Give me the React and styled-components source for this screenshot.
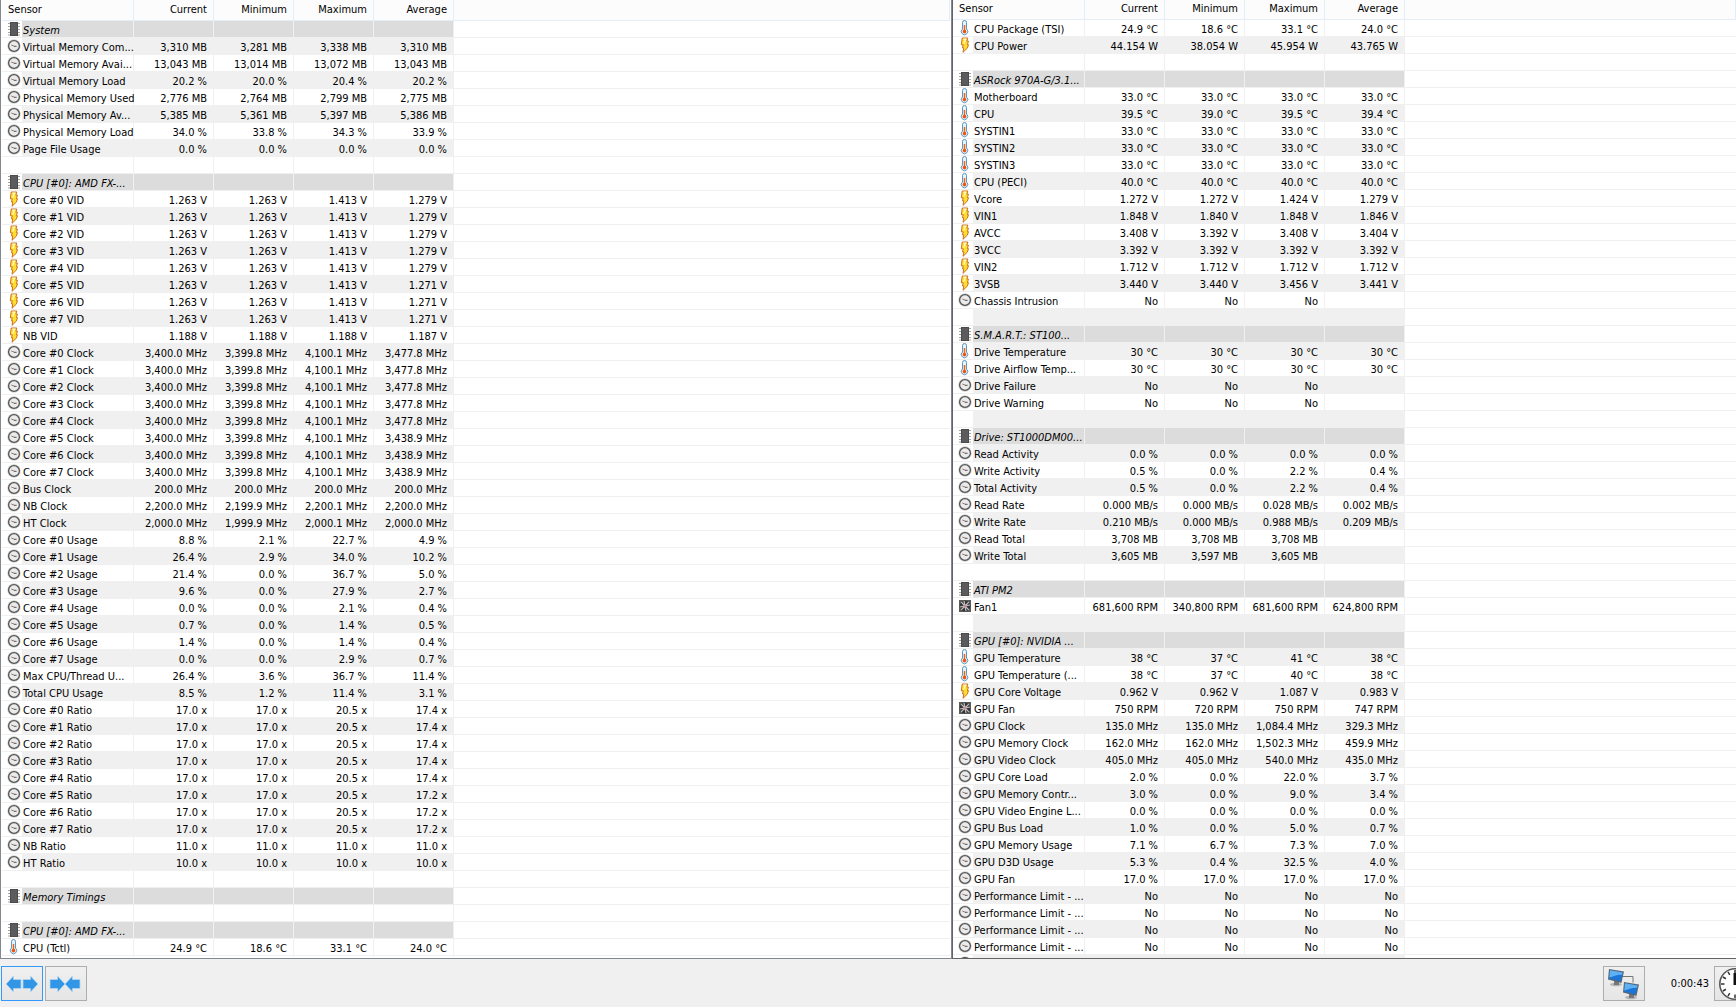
import React from "react";
import styled, { createGlobalStyle, css } from "styled-components";

const GlobalStyle = createGlobalStyle`
  * {
    box-sizing: border-box;
  }
  body {
    margin: 0;
    background: #f0f0f0;
    color: #000;
    font-family: "DejaVu Sans Condensed", Tahoma, "DejaVu Sans", sans-serif;
    font-size: 11px;
  }
`;

const Window = styled.div`
  display: flex;
  flex-direction: column;
  height: 100vh;
  overflow: hidden;
`;

const Panels = styled.main`
  display: grid;
  grid-template-columns: 17fr 14fr;
  flex: 1;
  min-height: 0;
`;

const Panel = styled.section`
  overflow: hidden;
  background: #fff;
  padding: 0 1px;
  border: 1px solid #828790;
  border-top: none;
  ${(props) =>
    props.$dark &&
    css`
      padding: 0;
      border-color: #646464;
      border-right: none;
    `}
`;

const Table = styled.table`
  width: 100%;
  table-layout: fixed;
  border-collapse: separate;
  border-spacing: 0;
`;

const NameCol = styled.col`
  width: 132px;
`;

const ValueCol = styled.col`
  width: 80px;
`;

const HeadCell = styled.th`
  height: ${(props) => (props.$short ? 20 : 21)}px;
  padding: 0 6px;
  background: #fcfcfc;
  border-right: 1px solid #e3eefb;
  border-bottom: 1px solid #e3eefb;
  font-weight: normal;
  line-height: ${(props) => (props.$short ? 18 : 20)}px;
  text-align: ${(props) => (props.$left ? "left" : "right")};
  vertical-align: top;
`;

const fills = {
  plain: "#fff",
  striped: "#f0f0f0",
  group: "#dcdcdc",
};

const cellLines = css`
  border-right: 1px solid #f0f0f0;
  border-bottom: 1px solid #f0f0f0;
`;

const NameCell = styled.th`
  ${cellLines}
  height: 17px;
  padding: 0;
  font-weight: normal;
  font-style: ${(props) => (props.$fill === "group" ? "italic" : "normal")};
  text-align: left;
`;

const NameBox = styled.div`
  display: flex;
  height: 16px;
`;

const IconBox = styled.span`
  display: flex;
  align-items: center;
  flex: none;
  width: 20px;
  padding-left: 5px;
`;

const Name = styled.span`
  flex: 1;
  min-width: 0;
  padding: 4px 0 0 1px;
  background: ${(props) => fills[props.$fill]};
  line-height: 12px;
  white-space: nowrap;
`;

const ValueCell = styled.td`
  ${cellLines}
  height: 17px;
  padding: 4px 6px 0 0;
  background: ${(props) => fills[props.$fill]};
  line-height: 12px;
  text-align: right;
  white-space: nowrap;
`;

const RestCell = styled.td`
  padding: 0;
  border-bottom: 1px solid #f0f0f0;
`;

const Toolbar = styled.footer`
  display: flex;
  align-items: center;
  flex: none;
  gap: 2px;
  height: 48px;
  padding: 1px 0 0 1px;
  overflow: hidden;
  background: #f0f0f0;
`;

const ToolButton = styled.button`
  display: flex;
  align-items: center;
  justify-content: center;
  flex: none;
  width: 42px;
  height: 35px;
  padding: 0;
  border: 1px solid ${(props) => (props.$active ? "#3399ff" : "#adadad")};
  background: linear-gradient(#f0f0f0, #e5e5e5);
`;

// the last button runs past the edge of the window
const Status = styled.div`
  display: flex;
  align-items: center;
  gap: 5px;
  margin-left: auto;
  margin-right: -20px;
`;

const Elapsed = styled.time`
  width: 59px;
  text-align: right;
`;

function ChipIcon() {
  return (
    <svg width="14" height="14" viewBox="0 0 14 14">
      <path
        d="M1 1.5h12M1 4.5h12M1 7.5h12M1 10.5h12M1 13h12"
        stroke="#a4a4a4"
        strokeWidth="1.2"
      />
      <rect x="3" y="0" width="8" height="14" fill="#4b4b4b" />
      <rect x="4" y="1" width="6" height="12" fill="#5b5b5d" />
    </svg>
  );
}

function ClockIcon() {
  return (
    <svg width="14" height="14" viewBox="0 0 14 14">
      <circle cx="7" cy="7" r="6.7" fill="#cfcfcf" />
      <circle cx="7" cy="7" r="5.4" fill="#ebebeb" stroke="#555" strokeWidth="1.3" />
      <path d="M4.3 6l3 1.2" stroke="#8a6a64" strokeWidth=".9" />
      <path d="M7 7.3h2.600" stroke="#444" strokeWidth=".9" />
    </svg>
  );
}

function BoltIcon() {
  return (
    <svg width="14" height="16" viewBox="0 0 14 16">
      <path
        d="M4.200 1h5.600L8.900 4.200h1.600L9.300 7.700h1.200L9.300 11.200 5 15.300l.8-4.500H4.400l.9-3H3.300z"
        fill="#ffdf2e"
        stroke="#c4641c"
        strokeWidth=".9"
      />
      <path d="M5.300 2.200h2.400L5.600 6.600" stroke="#fffbd0" strokeWidth="1.2" fill="none" />
    </svg>
  );
}

function ThermometerIcon() {
  return (
    <svg width="14" height="16" viewBox="0 0 14 16">
      <path
        d="M4.500 9V2.500a2 2 0 0 1 4 0V9a3.200 3.200 0 1 1-4 0z"
        fill="#e4f3fc"
        stroke="#5f97bb"
        strokeWidth="1"
      />
      <path d="M6.500 5v6" stroke="#f0641a" strokeWidth="1.500" />
      <circle cx="6.500" cy="11.600" r="1.800" fill="#f0540c" />
    </svg>
  );
}

function FanIcon() {
  return (
    <svg width="14" height="14" viewBox="0 0 14 14">
      <rect x="1" y="1" width="12" height="12" fill="#5a5a5a" />
      <circle cx="7" cy="7" r="5.3" fill="#333" />
      <path
        d="M7 7L6 2M7 7l3.800-3.800M7 7l5-1M7 7l3.800 3.800M7 7l1 5M7 7l-3.800 3.800M7 7L2 8M7 7L3.200 3.200"
        stroke="#c4c4c4"
        strokeWidth="1.200"
      />
      <circle cx="7" cy="7" r="1.5" fill="#c58f98" />
    </svg>
  );
}

const icons = {
  chip: ChipIcon,
  clock: ClockIcon,
  volt: BoltIcon,
  temp: ThermometerIcon,
  fan: FanIcon,
};

function ArrowsIcon({ inward }) {
  const left = "M0 9l7.500-8v3.500H15v9H7.500V17z";
  const right = "M15 9L7.500 1v3.500H0v9h7.500V17z";
  return (
    <svg width="34" height="18" viewBox="0 0 34 18" fill="#3296e6" stroke="#b5d5ee" strokeWidth=".8">
      <path d={inward ? right : left} transform="translate(1 0)" />
      <path d={inward ? left : right} transform={inward ? "translate(16 0)" : "translate(18 0)"} />
    </svg>
  );
}

function Monitor() {
  return (
    <>
      <ellipse cx="8" cy="15.500" rx="6" ry="1.800" fill="#b4b4b4" />
      <path d="M6 12h5v4H6z" fill="#777" />
      <path d="M1 0l15 2.500-2.600 11.500L0 10.500z" fill="#5b6670" />
      <path d="M2 1.200l12.600 2.200-2 9L1.200 9.600z" fill="#1976d8" />
      <path d="M2 1.200l12.600 2.200-.5 2.400C9 5.600 5 7.500 1.300 8.500z" fill="#5fb0f2" />
    </>
  );
}

function NetworkIcon() {
  return (
    <svg width="34" height="32" viewBox="0 0 34 32">
      <path d="M15 8.500h11v6" fill="none" stroke="#777" />
      <g transform="translate(1 1)">
        <Monitor />
      </g>
      <g transform="translate(16 14)">
        <Monitor />
      </g>
    </svg>
  );
}

function StopwatchIcon() {
  const ticks = [0, 30, 60, 90, 120, 150, 180, 210, 240, 270, 300, 330];
  return (
    <svg width="34" height="34" viewBox="0 0 34 34">
      <circle cx="17" cy="17" r="15.2" fill="#fff" stroke="#555" strokeWidth="1.6" />
      {ticks.map((angle) => (
        <path
          key={angle}
          d="M17 3v3.500"
          stroke="#333"
          strokeWidth="1.5"
          transform={`rotate(${angle} 17 17)`}
        />
      ))}
      <path d="M17 18V6" stroke="#111" strokeWidth="3" />
    </svg>
  );
}

// a line is "icon|name|current|minimum|maximum|average", an empty line is a spacer
const parse = (text) =>
  text
    .trim()
    .split("\n")
    .map((line) => {
      const [icon, name = "", ...values] = line.trim().split("|");
      return { icon, name, values };
    });

const systemRows = parse(`
  chip|System
  clock|Virtual Memory Com...|3,310 MB|3,281 MB|3,338 MB|3,310 MB
  clock|Virtual Memory Avai...|13,043 MB|13,014 MB|13,072 MB|13,043 MB
  clock|Virtual Memory Load|20.2 %|20.0 %|20.4 %|20.2 %
  clock|Physical Memory Used|2,776 MB|2,764 MB|2,799 MB|2,775 MB
  clock|Physical Memory Av...|5,385 MB|5,361 MB|5,397 MB|5,386 MB
  clock|Physical Memory Load|34.0 %|33.8 %|34.3 %|33.9 %
  clock|Page File Usage|0.0 %|0.0 %|0.0 %|0.0 %

  chip|CPU [#0]: AMD FX-...
  volt|Core #0 VID|1.263 V|1.263 V|1.413 V|1.279 V
  volt|Core #1 VID|1.263 V|1.263 V|1.413 V|1.279 V
  volt|Core #2 VID|1.263 V|1.263 V|1.413 V|1.279 V
  volt|Core #3 VID|1.263 V|1.263 V|1.413 V|1.279 V
  volt|Core #4 VID|1.263 V|1.263 V|1.413 V|1.279 V
  volt|Core #5 VID|1.263 V|1.263 V|1.413 V|1.271 V
  volt|Core #6 VID|1.263 V|1.263 V|1.413 V|1.271 V
  volt|Core #7 VID|1.263 V|1.263 V|1.413 V|1.271 V
  volt|NB VID|1.188 V|1.188 V|1.188 V|1.187 V
  clock|Core #0 Clock|3,400.0 MHz|3,399.8 MHz|4,100.1 MHz|3,477.8 MHz
  clock|Core #1 Clock|3,400.0 MHz|3,399.8 MHz|4,100.1 MHz|3,477.8 MHz
  clock|Core #2 Clock|3,400.0 MHz|3,399.8 MHz|4,100.1 MHz|3,477.8 MHz
  clock|Core #3 Clock|3,400.0 MHz|3,399.8 MHz|4,100.1 MHz|3,477.8 MHz
  clock|Core #4 Clock|3,400.0 MHz|3,399.8 MHz|4,100.1 MHz|3,477.8 MHz
  clock|Core #5 Clock|3,400.0 MHz|3,399.8 MHz|4,100.1 MHz|3,438.9 MHz
  clock|Core #6 Clock|3,400.0 MHz|3,399.8 MHz|4,100.1 MHz|3,438.9 MHz
  clock|Core #7 Clock|3,400.0 MHz|3,399.8 MHz|4,100.1 MHz|3,438.9 MHz
  clock|Bus Clock|200.0 MHz|200.0 MHz|200.0 MHz|200.0 MHz
  clock|NB Clock|2,200.0 MHz|2,199.9 MHz|2,200.1 MHz|2,200.0 MHz
  clock|HT Clock|2,000.0 MHz|1,999.9 MHz|2,000.1 MHz|2,000.0 MHz
  clock|Core #0 Usage|8.8 %|2.1 %|22.7 %|4.9 %
  clock|Core #1 Usage|26.4 %|2.9 %|34.0 %|10.2 %
  clock|Core #2 Usage|21.4 %|0.0 %|36.7 %|5.0 %
  clock|Core #3 Usage|9.6 %|0.0 %|27.9 %|2.7 %
  clock|Core #4 Usage|0.0 %|0.0 %|2.1 %|0.4 %
  clock|Core #5 Usage|0.7 %|0.0 %|1.4 %|0.5 %
  clock|Core #6 Usage|1.4 %|0.0 %|1.4 %|0.4 %
  clock|Core #7 Usage|0.0 %|0.0 %|2.9 %|0.7 %
  clock|Max CPU/Thread U...|26.4 %|3.6 %|36.7 %|11.4 %
  clock|Total CPU Usage|8.5 %|1.2 %|11.4 %|3.1 %
  clock|Core #0 Ratio|17.0 x|17.0 x|20.5 x|17.4 x
  clock|Core #1 Ratio|17.0 x|17.0 x|20.5 x|17.4 x
  clock|Core #2 Ratio|17.0 x|17.0 x|20.5 x|17.4 x
  clock|Core #3 Ratio|17.0 x|17.0 x|20.5 x|17.4 x
  clock|Core #4 Ratio|17.0 x|17.0 x|20.5 x|17.4 x
  clock|Core #5 Ratio|17.0 x|17.0 x|20.5 x|17.2 x
  clock|Core #6 Ratio|17.0 x|17.0 x|20.5 x|17.2 x
  clock|Core #7 Ratio|17.0 x|17.0 x|20.5 x|17.2 x
  clock|NB Ratio|11.0 x|11.0 x|11.0 x|11.0 x
  clock|HT Ratio|10.0 x|10.0 x|10.0 x|10.0 x

  chip|Memory Timings

  chip|CPU [#0]: AMD FX-...
  temp|CPU (Tctl)|24.9 °C|18.6 °C|33.1 °C|24.0 °C
`);

const boardRows = parse(`
  temp|CPU Package (TSI)|24.9 °C|18.6 °C|33.1 °C|24.0 °C
  volt|CPU Power|44.154 W|38.054 W|45.954 W|43.765 W

  chip|ASRock 970A-G/3.1...
  temp|Motherboard|33.0 °C|33.0 °C|33.0 °C|33.0 °C
  temp|CPU|39.5 °C|39.0 °C|39.5 °C|39.4 °C
  temp|SYSTIN1|33.0 °C|33.0 °C|33.0 °C|33.0 °C
  temp|SYSTIN2|33.0 °C|33.0 °C|33.0 °C|33.0 °C
  temp|SYSTIN3|33.0 °C|33.0 °C|33.0 °C|33.0 °C
  temp|CPU (PECI)|40.0 °C|40.0 °C|40.0 °C|40.0 °C
  volt|Vcore|1.272 V|1.272 V|1.424 V|1.279 V
  volt|VIN1|1.848 V|1.840 V|1.848 V|1.846 V
  volt|AVCC|3.408 V|3.392 V|3.408 V|3.404 V
  volt|3VCC|3.392 V|3.392 V|3.392 V|3.392 V
  volt|VIN2|1.712 V|1.712 V|1.712 V|1.712 V
  volt|3VSB|3.440 V|3.440 V|3.456 V|3.441 V
  clock|Chassis Intrusion|No|No|No

  chip|S.M.A.R.T.: ST100...
  temp|Drive Temperature|30 °C|30 °C|30 °C|30 °C
  temp|Drive Airflow Temp...|30 °C|30 °C|30 °C|30 °C
  clock|Drive Failure|No|No|No
  clock|Drive Warning|No|No|No

  chip|Drive: ST1000DM00...
  clock|Read Activity|0.0 %|0.0 %|0.0 %|0.0 %
  clock|Write Activity|0.5 %|0.0 %|2.2 %|0.4 %
  clock|Total Activity|0.5 %|0.0 %|2.2 %|0.4 %
  clock|Read Rate|0.000 MB/s|0.000 MB/s|0.028 MB/s|0.002 MB/s
  clock|Write Rate|0.210 MB/s|0.000 MB/s|0.988 MB/s|0.209 MB/s
  clock|Read Total|3,708 MB|3,708 MB|3,708 MB
  clock|Write Total|3,605 MB|3,597 MB|3,605 MB

  chip|ATI PM2
  fan|Fan1|681,600 RPM|340,800 RPM|681,600 RPM|624,800 RPM

  chip|GPU [#0]: NVIDIA ...
  temp|GPU Temperature|38 °C|37 °C|41 °C|38 °C
  temp|GPU Temperature (...|38 °C|37 °C|40 °C|38 °C
  volt|GPU Core Voltage|0.962 V|0.962 V|1.087 V|0.983 V
  fan|GPU Fan|750 RPM|720 RPM|750 RPM|747 RPM
  clock|GPU Clock|135.0 MHz|135.0 MHz|1,084.4 MHz|329.3 MHz
  clock|GPU Memory Clock|162.0 MHz|162.0 MHz|1,502.3 MHz|459.9 MHz
  clock|GPU Video Clock|405.0 MHz|405.0 MHz|540.0 MHz|435.0 MHz
  clock|GPU Core Load|2.0 %|0.0 %|22.0 %|3.7 %
  clock|GPU Memory Contr...|3.0 %|0.0 %|9.0 %|3.4 %
  clock|GPU Video Engine L...|0.0 %|0.0 %|0.0 %|0.0 %
  clock|GPU Bus Load|1.0 %|0.0 %|5.0 %|0.7 %
  clock|GPU Memory Usage|7.1 %|6.7 %|7.3 %|7.0 %
  clock|GPU D3D Usage|5.3 %|0.4 %|32.5 %|4.0 %
  clock|GPU Fan|17.0 %|17.0 %|17.0 %|17.0 %
  clock|Performance Limit - ...|No|No|No|No
  clock|Performance Limit - ...|No|No|No|No
  clock|Performance Limit - ...|No|No|No|No
  clock|Performance Limit - ...|No|No|No|No
  clock|
`);

const columns = ["Current", "Minimum", "Maximum", "Average"];

function SensorRow({ row, striped }) {
  const Icon = icons[row.icon];
  let fill = striped ? "striped" : "plain";
  if (row.icon === "chip") fill = "group";

  return (
    <tr>
      <NameCell scope="row" $fill={fill}>
        <NameBox>
          <IconBox>{Icon && <Icon />}</IconBox>
          <Name $fill={fill}>{row.name}</Name>
        </NameBox>
      </NameCell>
      {columns.map((column, i) => (
        <ValueCell key={column} $fill={fill}>
          {row.values[i]}
        </ValueCell>
      ))}
      <RestCell />
    </tr>
  );
}

function SensorTable({ rows, short }) {
  return (
    <Table>
      <colgroup>
        <NameCol />
        {columns.map((column) => (
          <ValueCol key={column} />
        ))}
        <col />
      </colgroup>
      <thead>
        <tr>
          <HeadCell $left $short={short}>
            Sensor
          </HeadCell>
          {columns.map((column) => (
            <HeadCell key={column} $short={short}>
              {column}
            </HeadCell>
          ))}
          <HeadCell as="td" $short={short} />
        </tr>
      </thead>
      <tbody>
        {rows.map((row, i) => (
          <SensorRow key={i} row={row} striped={i % 2 === 1} />
        ))}
      </tbody>
    </Table>
  );
}

function App() {
  return (
    <>
      <GlobalStyle />
      <Window>
        <Panels>
          <Panel>
            <SensorTable rows={systemRows} />
          </Panel>
          <Panel $dark>
            <SensorTable rows={boardRows} short />
          </Panel>
        </Panels>
        <Toolbar>
          <ToolButton $active aria-label="Expand columns">
            <ArrowsIcon />
          </ToolButton>
          <ToolButton aria-label="Shrink columns">
            <ArrowsIcon inward />
          </ToolButton>
          <Status>
            <ToolButton aria-label="Remote sensors">
              <NetworkIcon />
            </ToolButton>
            <Elapsed>0:00:43</Elapsed>
            <ToolButton aria-label="Reset timer">
              <StopwatchIcon />
            </ToolButton>
          </Status>
        </Toolbar>
      </Window>
    </>
  );
}

export default App;
